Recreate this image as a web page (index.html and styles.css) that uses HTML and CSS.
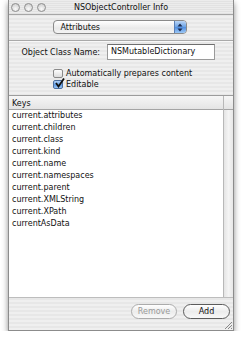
FILE: index.html
```html
<!DOCTYPE html>
<html lang="en">
<head>
  <meta charset="UTF-8" />
  <title>NSObjectController Info</title>
  <link rel="stylesheet" href="styles.css">
</head>
<body>

  <div class="window">
    <div class="titlebar">
      <div class="lights">
        <span></span><span></span><span></span>
      </div>
      <div class="title">NSObjectController Info</div>
    </div>

    <div class="popup-row">
      <div class="popup">
        <span class="popup-label">Attributes</span>
        <span class="stepper">
          <svg width="6" height="9" viewBox="0 0 6 9">
            <path d="M3 0.5 L5.5 3.5 L0.5 3.5 Z" fill="#1a2a50"/>
            <path d="M3 8.5 L5.5 5.5 L0.5 5.5 Z" fill="#1a2a50"/>
          </svg>
        </span>
      </div>
    </div>

    <div class="props">
      <div class="field-row">
        <span class="field-label">Object Class Name:</span>
        <div class="textfield">NSMutableDictionary</div>
      </div>
      <div class="check-row first">
        <span class="box"></span>
        <span>Automatically prepares content</span>
      </div>
      <div class="check-row">
        <span class="box checked">
          <svg width="11" height="11" viewBox="0 0 11 11">
            <path d="M2 5 L4.5 8.5 L10 0.5" fill="none" stroke="#111" stroke-width="1.8"/>
          </svg>
        </span>
        <span>Editable</span>
      </div>
    </div>

    <div class="table">
      <div class="list">
        <div class="header">Keys</div>
        <div class="row">current.attributes</div>
        <div class="row">current.children</div>
        <div class="row">current.class</div>
        <div class="row">current.kind</div>
        <div class="row">current.name</div>
        <div class="row">current.namespaces</div>
        <div class="row">current.parent</div>
        <div class="row">current.XMLString</div>
        <div class="row">current.XPath</div>
        <div class="row">currentAsData</div>
      </div>
      <div class="scroller">
        <div class="corner"></div>
        <div class="track"></div>
      </div>
    </div>

    <div class="footer">
      <button class="btn" disabled>Remove</button>
      <button class="btn">Add</button>
      <svg class="grip" width="10" height="10" viewBox="0 0 10 10">
        <path d="M9 2 L2 9 M9 5 L5 9 M9 8 L8 9" stroke="#888" stroke-width="1"/>
      </svg>
    </div>
  </div>

</body>
</html>
```

FILE: styles.css
```css
* { box-sizing: border-box; margin: 0; padding: 0; }
body {
  background: #fff;
  font-family: "DejaVu Sans", "Liberation Sans", sans-serif;
  font-size: 8px;
  color: #111;
}

.window {
  margin-left: 8px;
  width: 226px;
  height: 331px;
  border: 1px solid #8c8c8c;
  border-top: none;
  display: flex;
  flex-direction: column;
  background: repeating-linear-gradient(to bottom, #efefef 0 2px, #e7e7e7 2px 4px);
  box-shadow: 0 3px 6px rgba(0,0,0,0.45);
  position: relative;
}

/* title bar */
.titlebar {
  height: 15px;
  border-bottom: 1px solid #a6a6a6;
  background: repeating-linear-gradient(to bottom, #ececec 0 1px, #e2e2e2 1px 2px);
  display: flex;
  align-items: center;
  position: relative;
}
.lights {
  display: flex;
  gap: 4px;
  padding-left: 2px;
}
.lights span {
  width: 9px;
  height: 9px;
  border-radius: 50%;
  border: 1px solid #8e8e8e;
  background: radial-gradient(circle at 50% 70%, #fafafa 0, #d6d6d6 70%);
}
.title {
  position: absolute;
  left: 0;
  right: 0;
  text-align: center;
  top: 3px;
  font-size: 8px;
}

/* popup */
.popup-row {
  display: flex;
  justify-content: center;
  padding: 5px 0 6px 0;
  border-bottom: 1px solid #a9a9a9;
  box-shadow: 0 1px 0 #f8f8f8;
}
.popup {
  width: 134px;
  height: 14px;
  margin-right: 3px;
  display: flex;
  align-items: center;
  justify-content: space-between;
  border: 1px solid #8a8a8a;
  border-radius: 4px;
  background: linear-gradient(to bottom, #ffffff, #e9e9e9 60%, #f4f4f4);
  overflow: hidden;
}
.popup-label {
  padding-left: 7px;
}
.stepper {
  width: 12px;
  height: 100%;
  display: flex;
  align-items: center;
  justify-content: center;
  background: linear-gradient(to bottom, #bcd6f6, #6aa2e6 50%, #4f8de0 51%, #9cc8f6);
  border-left: 1px solid #5a7fb5;
}

/* properties */
.props {
  padding: 3px 0 5px 0;
}
.field-row {
  display: flex;
  align-items: center;
  height: 16px;
}
.field-label {
  width: 98px;
  text-align: right;
  padding-right: 7px;
}
.textfield {
  width: 108px;
  height: 16px;
  border: 1px solid #9a9a9a;
  border-top-color: #6e6e6e;
  background: #fff;
  padding: 2px 0 0 3px;
}
.check-row {
  display: flex;
  align-items: center;
  height: 11px;
  padding-left: 44px;
  gap: 3px;
}
.check-row.first { margin-top: 8px; }
.box {
  width: 10px;
  height: 9px;
  border: 1px solid #8a8a8a;
  border-radius: 2px;
  background: linear-gradient(to bottom, #fdfdfd, #dcdcdc);
  position: relative;
}
.box.checked {
  background: linear-gradient(to bottom, #b5d3f7, #5e9be6 55%, #9cc6f4);
  border-color: #4b6e9e;
}
.box svg {
  position: absolute;
  left: 0;
  top: -3px;
}

/* table */
.table {
  height: 202px;
  display: flex;
  border-top: 1px solid #9c9c9c;
  background: #fff;
}
.list {
  flex: 1;
}
.header {
  height: 14px;
  padding: 3px 0 0 3px;
  border-bottom: 1px solid #a4a4a4;
  background: linear-gradient(to bottom, #f6f6f6, #e4e4e4);
}
.row {
  height: 12px;
  line-height: 12px;
  padding-left: 3px;
}
.scroller {
  width: 10px;
  border-left: 1px solid #b8b8b8;
  display: flex;
  flex-direction: column;
}
.corner {
  height: 14px;
  border-bottom: 1px solid #a4a4a4;
  background: linear-gradient(to bottom, #f6f6f6, #e4e4e4);
}
.track {
  flex: 1;
  background: linear-gradient(to right, #e4e4e4, #f4f4f4 50%, #e8e8e8);
}

/* bottom bar */
.footer {
  flex: 1;
  border-top: 1px solid #bdbdbd;
  display: flex;
  justify-content: flex-end;
  align-items: flex-start;
  padding: 6px 3px 0 0;
  gap: 6px;
  position: relative;
}
.btn {
  width: 47px;
  height: 15px;
  border: 1px solid #5c5c5c;
  border-radius: 8px;
  background: linear-gradient(to bottom, #ffffff, #ececec 50%, #f8f8f8);
  font-family: "DejaVu Sans", "Liberation Sans", sans-serif;
  font-size: 8px;
  color: #111;
}
.btn:disabled {
  border-color: #ababab;
  color: #9a9a9a;
  width: 46px;
}
.grip {
  position: absolute;
  right: 0;
  bottom: 0;
}
```
